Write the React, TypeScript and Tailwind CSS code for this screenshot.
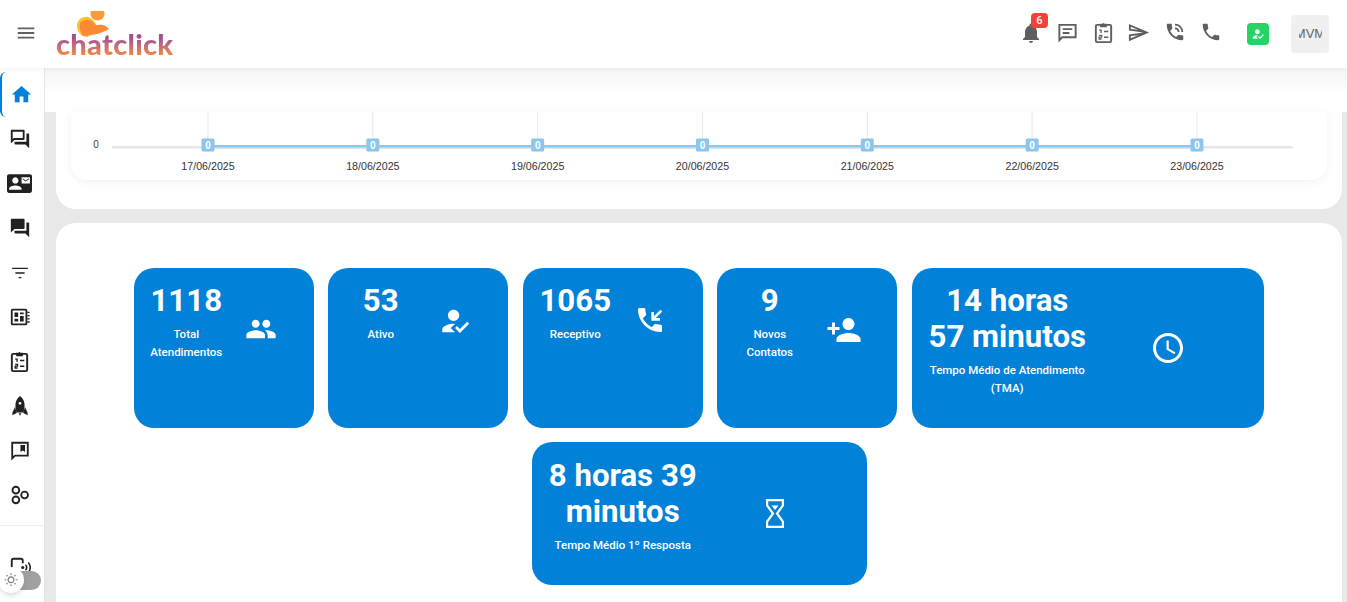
import React from "react";
import {
  MdMenu, MdHome, MdOutlineForum, MdContactMail, MdForum, MdNotifications, MdOutlineSend, MdPhoneInTalk, MdPhone,
  MdPeople, MdHowToReg, MdPersonAdd, MdOutlineAccessTime, MdOutlineWbSunny,
} from "react-icons/md";

const Clip = ({ size = 24 }: { size?: number }) => (
  <svg width={size} height={size} viewBox="0 0 24 24" fill="none" stroke="currentColor" strokeWidth="2">
    <rect x="4" y="4" width="16" height="18" rx="1.500" />
    <path d="M8.500 6.500V2.800h2.500a1.200 1.200 0 0 1 2 0h2.500v3.700z" fill="currentColor" stroke="none" />
    <path d="M7.500 9.500h2v3M7.500 15h2.500v1.800H7.500v2H10M12.500 11h4.500M12.500 17h4.500" strokeWidth="1.400" />
  </svg>
);
const Paper = ({ size = 24 }: { size?: number }) => (
  <svg width={size} height={size} viewBox="0 0 24 24" fill="none" stroke="currentColor" strokeWidth="2">
    <rect x="3" y="4" width="16" height="16" rx="1" />
    <path d="M6 7h4v5H6zM12 7h4v2h-4zM12 11h4v6h-4zM6 14h4v3H6z" fill="currentColor" stroke="none" />
    <path d="M20 7h2.500M20 10.500h2.500M20 14h2.500M20 17.500h2.500" strokeWidth="1.500" />
  </svg>
);
const ChatMark = ({ size = 24 }: { size?: number }) => (
  <svg width={size} height={size} viewBox="0 0 24 24" fill="none" stroke="currentColor" strokeWidth="2">
    <path d="M3.500 3h17v14H6.500l-3 3z" />
    <path d="M12.500 5.500h5v7.500l-2.500-1.600-2.500 1.600z" fill="currentColor" stroke="none" />
  </svg>
);
const Device = ({ size = 24 }: { size?: number }) => (
  <svg width={size} height={size} viewBox="0 0 24 24" fill="none" stroke="currentColor" strokeWidth="2">
    <path d="M3 22V5a2 2 0 0 1 2-2h8a2 2 0 0 1 2 2v3" />
    <circle cx="15" cy="12.500" r="1.700" fill="currentColor" stroke="none" />
    <path d="M18 9.500a4.500 4.500 0 0 1 0 6M21 7a8 8 0 0 1 0 11" strokeWidth="1.700" />
  </svg>
);
const Filter = ({ size = 24 }: { size?: number }) => (
  <svg width={size} height={size} viewBox="0 0 24 24" fill="none" stroke="currentColor" strokeWidth="1.500">
    <path d="M3.500 7h17M7 12h10M10.500 17h3" />
  </svg>
);
const Rocket = ({ size = 24 }: { size?: number }) => (
  <svg width={size} height={size} viewBox="0 0 24 24" fill="currentColor">
    <path fillRule="evenodd" d="M12 1c-3.500 2.800-5 6.500-5 10 0 2.800.5 5.200 1.200 8h7.600c.7-2.800 1.200-5.200 1.200-8 0-3.500-1.500-7.200-5-10zM12 7.500a1.600 1.600 0 1 1 0 3.200 1.600 1.600 0 0 1 0-3.200z" />
    <path d="M6.500 13 3.800 19l-.3 3 5-2.500zM17.500 13l2.700 6 .3 3-5-2.500zM10.500 20h3l-1.500 2.500z" />
  </svg>
);
const Rings = ({ size = 24 }: { size?: number }) => (
  <svg width={size} height={size} viewBox="0 0 24 24" fill="none" stroke="currentColor" strokeWidth="2">
    <circle cx="7.500" cy="6.700" r="3.700" />
    <circle cx="7.500" cy="17.300" r="3.700" />
    <circle cx="17" cy="12" r="3.700" />
  </svg>
);
const ChatLines = ({ size = 24 }: { size?: number }) => (
  <svg width={size} height={size} viewBox="0 0 24 24" fill="none" stroke="currentColor" strokeWidth="2">
    <path d="M3.500 4h17v13H6.500l-3 3z" />
    <path d="M7 8.500h10M7 12.500h7" />
  </svg>
);
const PhoneIn = ({ size = 24 }: { size?: number }) => (
  <svg width={size} height={size} viewBox="0 0 24 24">
    <path fill="currentColor" d="M20 15.500c-1.250 0-2.450-.2-3.570-.57a1.020 1.020 0 0 0-1.020.24l-2.200 2.200a15.045 15.045 0 0 1-6.590-6.590l2.200-2.200c.28-.27.36-.66.25-1.010A11.360 11.360 0 0 1 8.500 4c0-.55-.45-1-1-1H4c-.55 0-1 .45-1 1 0 9.390 7.610 17 17 17 .55 0 1-.45 1-1v-3.500c0-.55-.45-1-1-1z" />
    <path fill="none" stroke="currentColor" strokeWidth="2" d="M14 6v5.500h5.500M14.500 11 20.500 5" />
  </svg>
);
const Hourglass = () => (
  <svg width="18" height="29" viewBox="0 0 18 29" fill="none" stroke="currentColor" strokeWidth="2.200">
    <path d="M1.100 1.100h15.800v5.400L11 14.500l5.900 8v5.400H1.100v-5.400l5.900-8-5.900-8z" />
    <path d="M5.500 6.500h7L9 11z" fill="currentColor" stroke="none" />
  </svg>
);

const sideItems = [
  <MdOutlineForum size={22} />, <MdContactMail size={25} />, <MdForum size={22} />, <Filter size={22} />,
  <Paper size={22} />, <Clip size={23} />, <Rocket size={22} />, <ChatMark size={22} />, <Rings size={22} />,
];

const Sidebar = () => (
  <aside className="w-[45px] shrink-0 bg-white border-r border-[#e4e4e4] flex flex-col relative">
    <div className="h-[45px] mt-[4px] border-l-2 border-[#0080d8] rounded-l-md flex items-center justify-center text-[#0080d8] pr-[4px]">
      <MdHome size={23} />
    </div>
    <div className="flex flex-col text-[#212121]">
      {sideItems.map((ic, i) => (
        <div key={i} className="h-[44.500px] flex items-center justify-center pr-[5px]">{ic}</div>
      ))}
    </div>
    <div className="border-t border-[#ececec] mt-[7px] h-[54px] flex items-start justify-center pt-[30px] text-[#212121] pr-[5px]">
      <Device size={22} />
    </div>
    <div className="absolute left-[5px] top-[503px] w-[36px] h-[19px] rounded-full bg-[#a0a0a0]" />
    <div className="absolute left-[-2px] top-[499px] w-[26px] h-[26px] rounded-full bg-white shadow-md flex items-center justify-center text-[#777]">
      <MdOutlineWbSunny size={14} />
    </div>
  </aside>
);

const Header = () => (
  <header className="h-[68px] bg-white shadow-[0_1px_6px_rgba(0,0,0,0.06)] z-10 relative flex items-center shrink-0">
    <div className="w-[53px] flex justify-center text-[#616161] pr-[1px] pb-[3px]"><MdMenu size={22} /></div>
    <div className="relative w-[120px] h-[68px] ml-[3px]">
      <svg width="40" height="30" viewBox="0 0 40 30" className="absolute left-[18px] top-[9px]">
        <path d="M17 2h13a7 7 0 1 1-13 0z" fill="#fb9b3b" />
        <path d="M3 17C3 11 8 7 14 8 18 9 20 12 22 15L14 28C8 28 3 24 3 17Z" fill="#fcc52d" />
        <path d="M6 14C8 11 13 10 16 11 20 13 21 17 24 16 28 15 32 16 35 20 31 23 18 27 9 27 6 23 5 18 6 14Z" fill="#fb8a35" />
      </svg>
      <span className="absolute left-0 top-[24px] text-[29px] leading-[40px] font-black tracking-[0.3px] bg-linear-to-b from-[#a34f96] from-35% to-[#f78a2d] to-80% bg-clip-text text-transparent font-['Lato',sans-serif]">chatclick</span>
    </div>
    <div className="ml-auto flex items-center text-[#5f5f5f] pr-[18px]">
      <div className="w-[36px] flex justify-center relative pb-[2px]">
        <MdNotifications size={24} />
        <span className="absolute left-[18px] top-[-8px] w-[17px] h-[15px] rounded-[4px] bg-[#f44336] text-white text-[11px] leading-[15px] text-center font-medium font-['Roboto',sans-serif]">6</span>
      </div>
      <div className="w-[36px] flex justify-center pb-[4px]"><ChatLines size={23} /></div>
      <div className="w-[36px] flex justify-center pb-[4px]"><Clip size={23} /></div>
      <div className="w-[36px] flex justify-center pb-[4px] pr-[1px]"><MdOutlineSend size={23} /></div>
      <div className="w-[36px] flex justify-center pb-[4px]"><MdPhoneInTalk size={22} /></div>
      <div className="w-[36px] flex justify-center pb-[4px]"><MdPhone size={22} /></div>
      <div className="w-[22px] h-[22px] ml-[18px] rounded-[4px] bg-[#25d366] flex items-center justify-center text-white"><MdHowToReg size={14} /></div>
      <div className="w-[38px] h-[38px] ml-[22px] rounded-[4px] bg-[#f0f0f0] flex items-center justify-center">
        <span className="text-[13px] text-[#666] font-['Liberation_Sans',sans-serif] w-[23px] overflow-hidden whitespace-nowrap flex justify-center">MVM</span>
      </div>
    </div>
  </header>
);

const dates = ["17/06/2025", "18/06/2025", "19/06/2025", "20/06/2025", "21/06/2025", "22/06/2025", "23/06/2025"];

const Chart = () => (
  <svg width="1256" height="68" viewBox="0 2 1256 68" className="block">
    <text x="25" y="38" fontSize="10" textAnchor="middle" fill="#444" fontFamily="Liberation Sans, sans-serif">0</text>
    <rect x="41" y="36" width="1181" height="2.500" fill="#e6e6e6" />
    {dates.map((_, i) => <rect key={i} x={136.500 + i * 164.83} y="2" width="1" height="40" fill="#e8e8e8" />)}
    <rect x="137" y="35" width="989" height="2" fill="#90c6ea" />
    <rect x="137" y="37" width="989" height="1.500" fill="#bcd9ec" />
    {dates.map((d, i) => (
      <g key={d}>
        <rect x={130.500 + i * 164.83} y="28.500" width="13" height="13" rx="1.500" fill="#8cc6ec" />
        <text x={137 + i * 164.83} y="38.500" fontSize="10" textAnchor="middle" fill="#fff" fontFamily="Liberation Sans, sans-serif" fontWeight="700">0</text>
        <text x={137 + i * 164.83} y="60" fontSize="10.670" textAnchor="middle" fill="#333" fontFamily="Liberation Sans, sans-serif">{d}</text>
      </g>
    ))}
  </svg>
);

const Card = ({ value, label, icon, w, h, tw, iconX, pt = "pt-[15px]" }: {
  value: React.ReactNode; label: React.ReactNode; icon: React.ReactNode; w: string; h: string; tw: string; iconX: string; pt?: string;
}) => (
  <div className={`${w} ${h} rounded-[20px] bg-[#0281d9] text-white flex items-start pl-[17px] shrink-0`}>
    <div className={`${tw} ${pt} text-center flex flex-col items-center shrink-0 self-start`}>
      <div className="text-[31.200px] leading-[36px] font-bold whitespace-nowrap">{value}</div>
      <div className="text-[11.500px] leading-[18px] font-medium mt-[6px] whitespace-nowrap">{label}</div>
    </div>
    <div className={`${iconX} flex items-center justify-center self-start`}>{icon}</div>
  </div>
);

export default function App() {
  return (
    <div className="w-[1347px] h-[602px] overflow-hidden flex flex-col bg-white font-['Roboto',sans-serif]">
      <Header />
      <div className="flex flex-1 min-h-0">
        <Sidebar />
        <main className="flex-1 min-w-0 bg-[#e8e8e8] overflow-hidden flex flex-col">
          <div className="h-[44px] shrink-0 bg-linear-to-b from-[#f4f4f4] to-white to-60%" />
          <section className="ml-[11px] mr-[5px] h-[97px] bg-white rounded-b-[20px] shrink-0 px-[15px]">
            <div className="h-[68px] rounded-b-[16px] bg-white shadow-[0_2px_10px_rgba(0,0,0,0.06)] overflow-hidden"><Chart /></div>
          </section>
          <section className="ml-[11px] mr-[5px] mt-[14px] flex-1 bg-white rounded-t-[20px] pt-[45px]">
            <div className="flex flex-wrap justify-center gap-x-[14.500px] gap-y-[14px] pr-[0.500px]">
              <Card w="w-[180px]" h="h-[160px]" tw="w-[71px]" iconX="w-[78px] h-[122px]" value="1118" label={<>Total<br />Atendimentos</>} icon={<MdPeople size={32} />} />
              <Card w="w-[180px]" h="h-[160px]" tw="w-[71px]" iconX="w-[78px] h-[106px]" value="53" label="Ativo" icon={<MdHowToReg size={34} />} />
              <Card w="w-[180px]" h="h-[160px]" tw="w-[71px]" iconX="w-[78px] h-[104px]" value="1065" label="Receptivo" icon={<PhoneIn size={32} />} />
              <Card w="w-[180px]" h="h-[160px]" tw="w-[71px]" iconX="w-[78px] h-[124px]" value="9" label={<>Novos<br />Contatos</>} icon={<MdPersonAdd size={36} />} />
              <Card w="w-[352px]" h="h-[160px]" tw="w-[157px]" iconX="w-[164px] h-[160px]" value={<>14 horas<br />57 minutos</>} label={<>Tempo Médio de Atendimento<br />(TMA)</>} icon={<MdOutlineAccessTime size={36} />} />
              <Card w="w-[335px] ml-[1px]" h="h-[143px]" tw="w-[148px]" iconX="w-[156px] h-[143px]" pt="pt-[16px]" value={<>8 horas 39<br />minutos</>} label="Tempo Médio 1º Resposta" icon={<Hourglass />} />
            </div>
          </section>
        </main>
      </div>
    </div>
  );
}
